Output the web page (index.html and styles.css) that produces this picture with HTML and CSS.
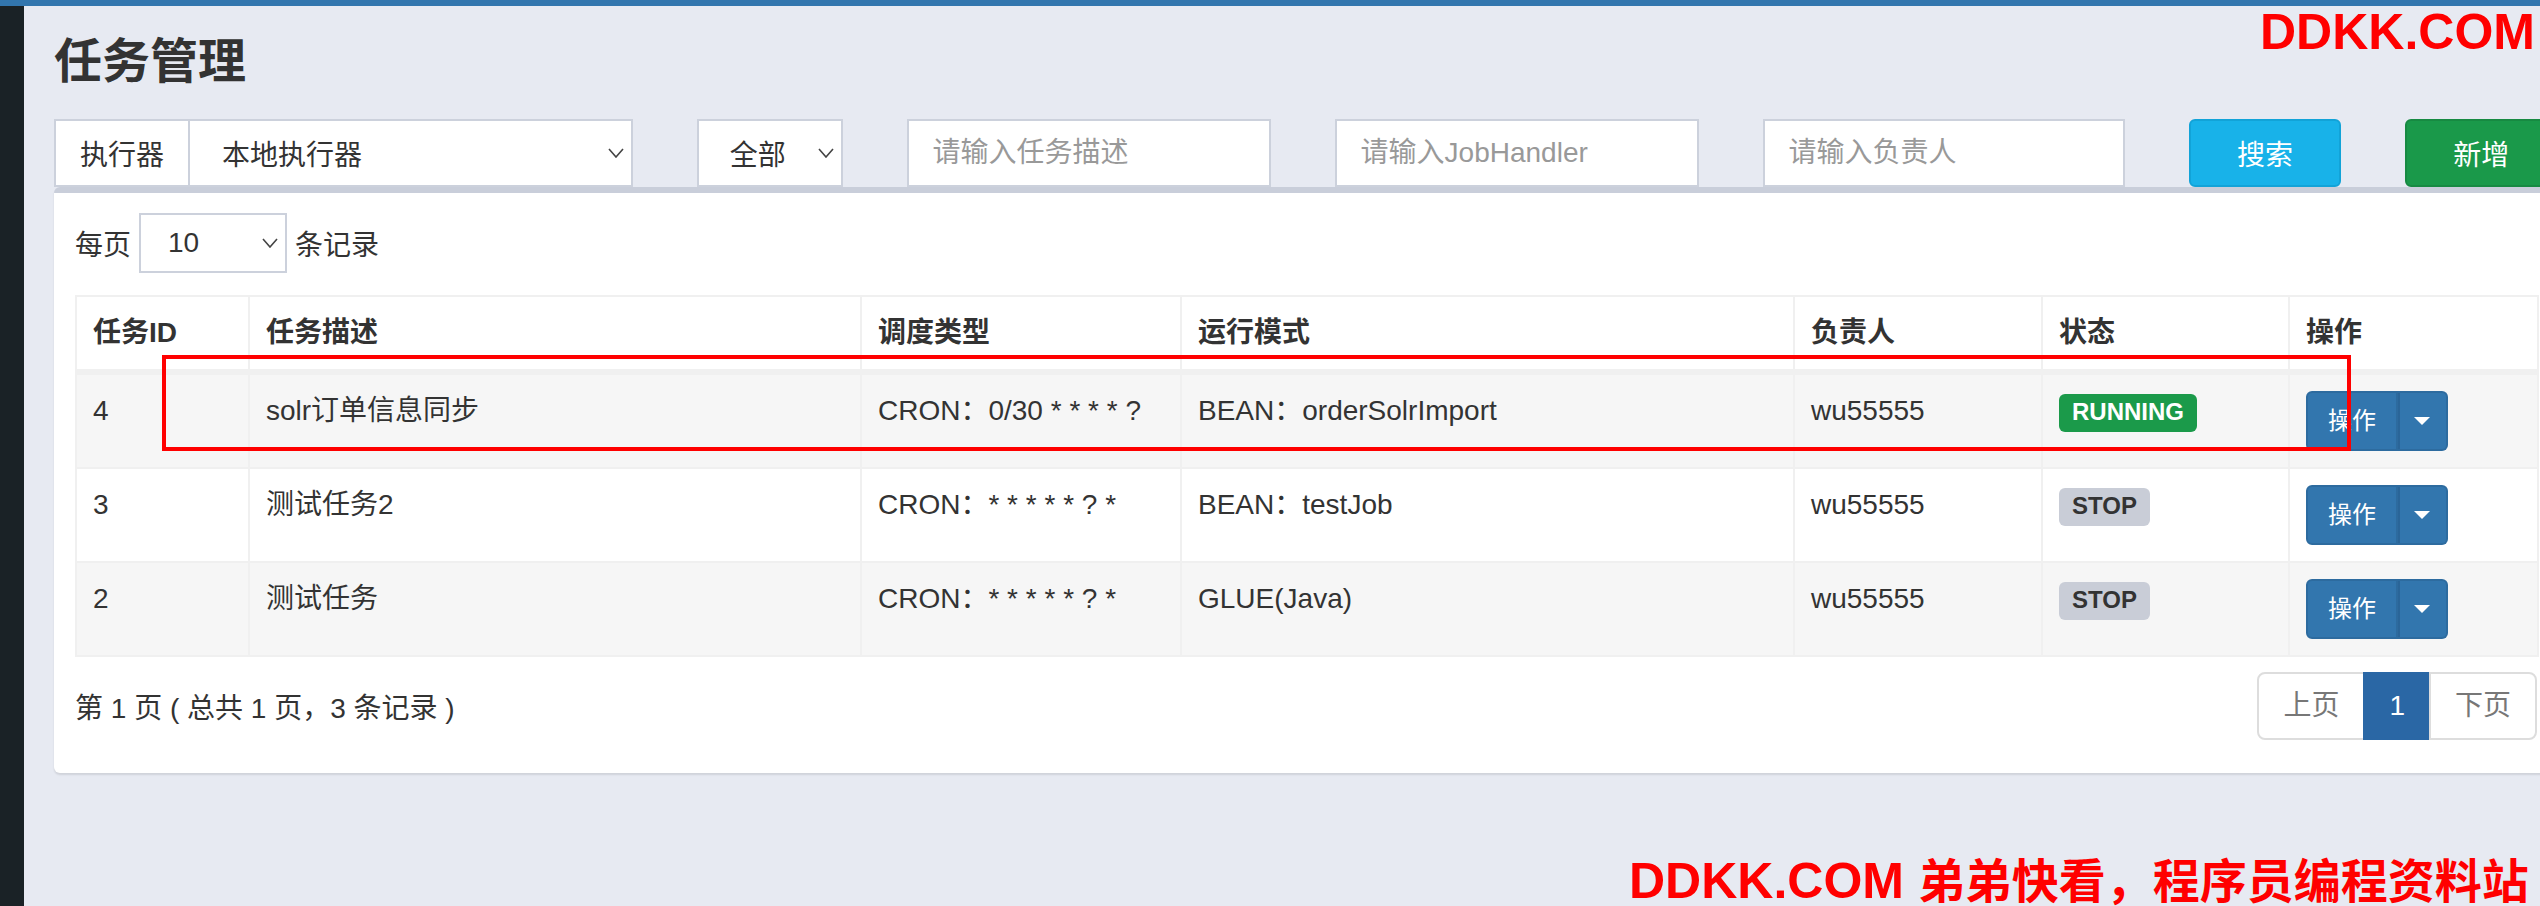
FILE: index.html
```
<!DOCTYPE html>
<html lang="zh-CN">
<head>
    <meta charset="UTF-8">
    <title>任务管理</title>
    <link rel="stylesheet" href="styles.css">
</head>
<body>
    <div class="topbar"></div>
    <div class="layout">
        <aside class="sidebar"></aside>
        <main class="content">
            <h1 class="page-title">任务管理</h1>
            <div class="filters">
                <div class="input-group">
                    <span class="addon">执行器</span>
                    <div class="select select-group">本地执行器
                        <svg class="chev" viewBox="0 0 16 10" width="16" height="10"><path d="M1 1l7 8 7-8" fill="none" stroke="#444" stroke-width="1.6"/></svg>
                    </div>
                </div>
                <div class="select select-status">全部
                    <svg class="chev" viewBox="0 0 16 10" width="16" height="10"><path d="M1 1l7 8 7-8" fill="none" stroke="#444" stroke-width="1.6"/></svg>
                </div>
                <input class="field field-desc" type="text" placeholder="请输入任务描述">
                <input class="field field-handler" type="text" placeholder="请输入JobHandler">
                <input class="field field-author" type="text" placeholder="请输入负责人">
                <button class="btn btn-info">搜索</button>
                <button class="btn btn-success">新增</button>
            </div>

            <div class="box">
                <div class="length">
                    <span>每页</span>
                    <div class="select select-len">10
                        <svg class="chev" viewBox="0 0 16 10" width="16" height="10"><path d="M1 1l7 8 7-8" fill="none" stroke="#444" stroke-width="1.6"/></svg>
                    </div>
                    <span>条记录</span>
                </div>

                <table class="job-table">
                    <thead>
                        <tr>
                            <th class="col-id">任务ID</th>
                            <th class="col-desc">任务描述</th>
                            <th class="col-type">调度类型</th>
                            <th class="col-mode">运行模式</th>
                            <th class="col-owner">负责人</th>
                            <th class="col-status">状态</th>
                            <th class="col-op">操作</th>
                        </tr>
                    </thead>
                    <tbody>
                        <tr>
                            <td>4</td>
                            <td>solr订单信息同步</td>
                            <td>CRON：0/30 * * * * ?</td>
                            <td>BEAN：orderSolrImport</td>
                            <td>wu55555</td>
                            <td><span class="label label-running">RUNNING</span></td>
                            <td>
                                <div class="btn-group">
                                    <span class="btn-op">操作</span>
                                    <span class="btn-caret"><i class="caret"></i></span>
                                </div>
                            </td>
                        </tr>
                        <tr>
                            <td>3</td>
                            <td>测试任务2</td>
                            <td>CRON：* * * * * ? *</td>
                            <td>BEAN：testJob</td>
                            <td>wu55555</td>
                            <td><span class="label label-stop">STOP</span></td>
                            <td>
                                <div class="btn-group">
                                    <span class="btn-op">操作</span>
                                    <span class="btn-caret"><i class="caret"></i></span>
                                </div>
                            </td>
                        </tr>
                        <tr>
                            <td>2</td>
                            <td>测试任务</td>
                            <td>CRON：* * * * * ? *</td>
                            <td>GLUE(Java)</td>
                            <td>wu55555</td>
                            <td><span class="label label-stop">STOP</span></td>
                            <td>
                                <div class="btn-group">
                                    <span class="btn-op">操作</span>
                                    <span class="btn-caret"><i class="caret"></i></span>
                                </div>
                            </td>
                        </tr>
                    </tbody>
                </table>

                <div class="table-foot">
                    <span class="info">第 1 页 ( 总共 1 页，3 条记录 )</span>
                    <ul class="pagination">
                        <li class="disabled"><a>上页</a></li>
                        <li class="active"><a>1</a></li>
                        <li class="disabled"><a>下页</a></li>
                    </ul>
                </div>
            </div>
        </main>
    </div>

    <div class="mark-box"></div>
    <div class="watermark wm-top">DDKK.COM</div>
    <div class="watermark wm-bottom">DDKK.COM <span class="wm-cn">弟弟快看，程序员编程资料站</span></div>
</body>
</html>
```
FILE: styles.css
```
body {
    margin: 0;
    padding: 0;
    width: 2540px;
    height: 906px;
    overflow: hidden;
    position: relative;
    background: #e7eaf2;
    font-family: 'Liberation Sans', 'Noto Sans CJK SC', sans-serif;
    font-size: 28px;
    color: #333;
}
.topbar {
    height: 6px;
    background: #3276ae;
}
.layout {
    display: flex;
    height: 900px;
}
.sidebar {
    flex: 0 0 24px;
    background: #1a2226;
}
.content {
    flex: 0 0 auto;
    width: 2503px;
    padding: 29px 30px 0;
}
.page-title {
    margin: 0 0 31px;
    font-size: 48px;
    line-height: 53px;
    font-weight: bold;
    color: #333;
}

/* filter bar */
.filters {
    display: flex;
    gap: 64px;
    height: 68px;
}
.input-group {
    display: flex;
    width: 580px;
}
.addon {
    display: flex;
    align-items: center;
    padding: 0 24px;
    background: #fff;
    border: 2px solid #ccd1dc;
    border-right: 0;
}
.select {
    display: flex;
    align-items: center;
    justify-content: space-between;
    box-sizing: border-box;
    background: #fff;
    border: 2px solid #ccd1dc;
    color: #333;
}
.select-group {
    flex: 1;
    padding: 0 7px 0 32px;
}
.select-status {
    width: 146px;
    padding: 0 7px 0 31px;
}
.field {
    box-sizing: border-box;
    height: 68px;
    padding: 0 24px;
    border: 2px solid #ccd1dc;
    background: #fff;
    font-family: inherit;
    font-size: 28px;
    color: #333;
    outline: none;
}
.field::placeholder {
    color: #999;
}
.field-desc { width: 364px; }
.field-handler { width: 364px; }
.field-author { width: 362px; }
.btn {
    height: 68px;
    border-radius: 6px;
    border: 2px solid transparent;
    color: #fff;
    font-family: inherit;
    font-size: 28px;
    padding: 0;
}
.btn-info {
    width: 153px;
    background: #18b2e9;
    border-color: #12a3d8;
}
.btn-success {
    width: 152px;
    background: #1a994a;
    border-color: #178a42;
}

/* box */
.box {
    background: #fff;
    border-top: 6px solid #c9ceda;
    border-radius: 6px;
    box-shadow: 0 2px 2px rgba(0, 0, 0, 0.1);
    padding: 20px 20px 20px 21px;
}
.length {
    display: flex;
    align-items: center;
    gap: 8px;
    height: 60px;
}
.select-len {
    width: 148px;
    height: 60px;
    padding: 0 7px 0 27px;
}

/* table */
.job-table {
    width: 2462px;
    margin-top: 22px;
    border-collapse: collapse;
    table-layout: fixed;
    border: 2px solid #f0f0f0;
}
.job-table th,
.job-table td {
    box-sizing: border-box;
    border: 2px solid #f0f0f0;
    padding: 16px;
    line-height: 40px;
    text-align: left;
    vertical-align: top;
    white-space: nowrap;
}
.job-table th {
    font-weight: bold;
    border-bottom-width: 6px;
}
.job-table tbody tr:nth-child(odd) {
    background: #f6f6f6;
}
.col-id { width: 173px; }
.col-desc { width: 612px; }
.col-type { width: 320px; }
.col-mode { width: 613px; }
.col-owner { width: 248px; }
.col-status { width: 247px; }
.col-op { width: 249px; }

.label {
    display: inline-block;
    font-size: 24px;
    font-weight: bold;
    line-height: 1;
    padding: 6px 13px 8px;
    border-radius: 6px;
}
.label-running {
    background: #1b9a4a;
    color: #fff;
}
.label-stop {
    background: #c9cdd7;
    color: #333;
}
.btn-group {
    display: inline-flex;
    height: 60px;
    color: #fff;
    font-size: 24px;
    vertical-align: top;
}
.btn-op,
.btn-caret {
    display: flex;
    align-items: center;
    background: #3276ae;
    border: 2px solid #2d6b9f;
}
.btn-op {
    padding: 0 20px;
    border-radius: 6px 0 0 6px;
}
.btn-caret {
    padding: 0 16px;
    border-left: 0;
    border-radius: 0 6px 6px 0;
    box-shadow: inset 2px 0 0 #2a6598;
}
.caret {
    width: 0;
    height: 0;
    border-top: 8px solid #fff;
    border-left: 8px solid transparent;
    border-right: 8px solid transparent;
}

/* footer */
.table-foot {
    display: flex;
    justify-content: space-between;
    align-items: center;
    margin: 15px 0 13px;
}
.pagination {
    display: flex;
    list-style: none;
    margin: 0;
    padding: 0;
}
.pagination a {
    display: block;
    padding: 12px 24px;
    line-height: 40px;
    border: 2px solid #ddd;
    margin-left: -2px;
    color: #777;
    background: #fff;
}
.pagination li:first-child a {
    margin-left: 0;
    border-radius: 8px 0 0 8px;
}
.pagination li:last-child a {
    border-radius: 0 8px 8px 0;
}
.pagination .active a {
    background: #2a67a5;
    border-color: #2a67a5;
    color: #fff;
}

/* overlays */
.mark-box {
    position: absolute;
    left: 162px;
    top: 355px;
    width: 2189px;
    height: 96px;
    box-sizing: border-box;
    border: 4px solid #ff0000;
}
.watermark {
    position: absolute;
    color: #ff0000;
    font-weight: bold;
    font-size: 50px;
    line-height: 1;
    white-space: nowrap;
}
.wm-top {
    top: 7px;
    right: 5px;
}
.wm-bottom {
    top: 856px;
    left: 1629px;
}
.wm-cn {
    font-size: 47px;
}
```
